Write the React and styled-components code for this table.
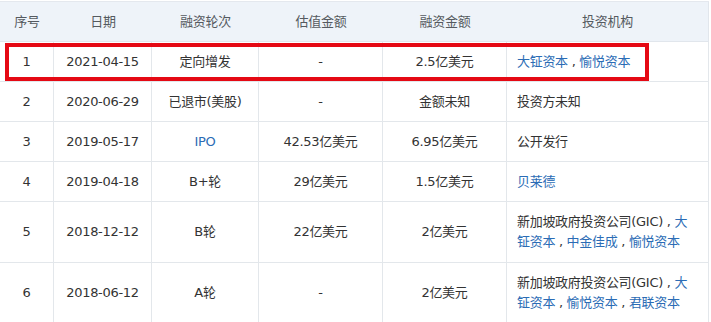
import React from "react";
import styled, { createGlobalStyle } from "styled-components";

const Global = createGlobalStyle`
  html, body { margin: 0; padding: 0; background: #ffffff; }
  body {
    font-family: "DejaVu Sans", "Noto Sans CJK SC", sans-serif;
    font-size: 13px;
    letter-spacing: -0.3px;
    color: #333333;
  }
`;

const Wrap = styled.div`
  position: relative;
  width: 711px;
  height: 322px;
  overflow: hidden;
  padding-top: 1px;
  box-sizing: border-box;
`;

const Table = styled.div`
  display: grid;
  grid-template-columns: 54px 98px 107px 124px 124px 202px;
  width: 709px;
  border-top: 1px solid #e4e8ee;
`;

const HeadCell = styled.div`
  height: 40px;
  box-sizing: border-box;
  background: #eef3f9;
  border-bottom: 1px solid #e1e6ec;
  border-right: ${(p) => (p.$last ? "1px solid #e1e6ec" : "none")};
  color: #555a60;
  display: flex;
  align-items: center;
  justify-content: center;
  line-height: 20px;
`;

const Cell = styled.div`
  height: ${(p) => p.$h}px;
  box-sizing: border-box;
  border-bottom: 1px solid #e3e7eb;
  border-right: 1px solid #e3e7eb;
  display: flex;
  align-items: center;
  justify-content: ${(p) => (p.$left ? "flex-start" : "center")};
  padding: ${(p) => (p.$left ? "0 14px 0 10px" : "0")};
  line-height: 20px;
  color: ${(p) => (p.$link ? "#2b6cb5" : "#333333")};
`;

const Text = styled.div`
  width: 100%;
`;

const Link = styled.span`
  color: #2b6cb5;
`;

const Highlight = styled.div`
  position: absolute;
  left: 5px;
  top: 43px;
  width: 644px;
  height: 38px;
  box-sizing: border-box;
  border: 4px solid #e50914;
  pointer-events: none;
`;

const headers = ["序号", "日期", "融资轮次", "估值金额", "融资金额", "投资机构"];

const sep = " , ";

const rows = [
  {
    h: 40,
    cells: ["1", "2021-04-15", "定向增发", "-", "2.5亿美元"],
    inv: [
      { t: "大钲资本", l: true },
      { t: sep },
      { t: "愉悦资本", l: true },
    ],
  },
  {
    h: 40,
    cells: ["2", "2020-06-29", "已退市(美股)", "-", "金额未知"],
    inv: [{ t: "投资方未知" }],
  },
  {
    h: 40,
    cells: ["3", "2019-05-17", "IPO", "42.53亿美元", "6.95亿美元"],
    linkRound: true,
    inv: [{ t: "公开发行" }],
  },
  {
    h: 40,
    cells: ["4", "2019-04-18", "B+轮", "29亿美元", "1.5亿美元"],
    inv: [{ t: "贝莱德", l: true }],
  },
  {
    h: 61,
    cells: ["5", "2018-12-12", "B轮", "22亿美元", "2亿美元"],
    inv: [
      { t: "新加坡政府投资公司(GIC)" },
      { t: sep },
      { t: "大钲资本", l: true },
      { t: sep },
      { t: "中金佳成", l: true },
      { t: sep },
      { t: "愉悦资本", l: true },
    ],
  },
  {
    h: 61,
    cells: ["6", "2018-06-12", "A轮", "-", "2亿美元"],
    inv: [
      { t: "新加坡政府投资公司(GIC)" },
      { t: sep },
      { t: "大钲资本", l: true },
      { t: sep },
      { t: "愉悦资本", l: true },
      { t: sep },
      { t: "君联资本", l: true },
    ],
  },
];

export default function App() {
  return (
    <>
      <Global />
      <Wrap>
        <Table>
          {headers.map((h, i) => (
            <HeadCell key={h} $last={i === headers.length - 1}>
              {h}
            </HeadCell>
          ))}
          {rows.map((r, ri) => (
            <React.Fragment key={ri}>
              {r.cells.map((c, ci) => (
                <Cell
                  key={ci}
                  $h={r.h}
                  $link={r.linkRound && ci === 2}
                >
                  {c}
                </Cell>
              ))}
              <Cell $h={r.h} $left>
                <Text>
                  {r.inv.map((p, pi) =>
                    p.l ? <Link key={pi}>{p.t}</Link> : <span key={pi}>{p.t}</span>
                  )}
                </Text>
              </Cell>
            </React.Fragment>
          ))}
        </Table>
        <Highlight />
      </Wrap>
    </>
  );
}
